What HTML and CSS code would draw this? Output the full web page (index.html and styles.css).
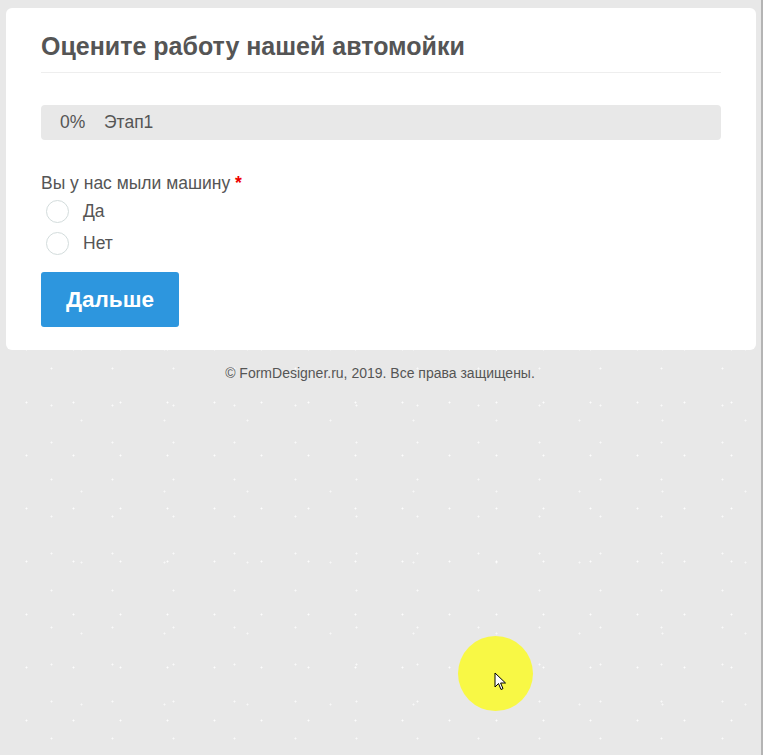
FILE: index.html
```html
<!DOCTYPE html>
<html lang="ru">
<head>
<meta charset="utf-8">
<title>Оцените работу нашей автомойки</title>
<link rel="stylesheet" href="styles.css">
</head>
<body>
<div class="page">
  <div class="card">
    <h1 class="title">Оцените работу нашей автомойки</h1>
    <div class="progress">
      <span class="pct">0%</span>
      <span class="stage">Этап1</span>
    </div>
    <div class="question">
      <div class="label">Вы у нас мыли машину <span class="req">*</span></div>
      <label class="option"><span class="radio"></span><span class="opt-text">Да</span></label>
      <label class="option"><span class="radio"></span><span class="opt-text">Нет</span></label>
    </div>
    <button class="next" type="button">Дальше</button>
  </div>
  <div class="footer">© FormDesigner.ru, 2019. Все права защищены.</div>
</div>
<div class="cursor">
  <svg width="14" height="20" viewBox="0 0 14 20" class="arrow">
    <path d="M1 1 L1 15 L4.5 11.5 L7 17.5 L9 16.6 L6.6 11 L11.5 11 Z" fill="#fff" stroke="#000" stroke-width="1" stroke-linejoin="miter"/>
  </svg>
</div>
</body>
</html>
```
FILE: styles.css
```css
html, body {
  margin: 0;
  padding: 0;
  height: 100%;
}
body {
  background-color: #e8e8e8;
  background-image:
    radial-gradient(circle, rgba(255,255,255,0.9) 0.8px, transparent 1.2px),
    radial-gradient(circle, rgba(255,255,255,0.8) 0.8px, transparent 1.2px),
    radial-gradient(circle, rgba(255,255,255,0.7) 0.8px, transparent 1.2px);
  background-size: 47px 53px, 61px 37px, 83px 71px;
  background-position: 3px 5px, 21px 17px, 40px 30px;
  font-family: "Liberation Sans", Arial, sans-serif;
  color: #555;
  overflow: hidden;
  position: relative;
  box-sizing: border-box;
  border-right: 2px solid #b4b4b4;
}
.page {
  padding: 8px 5px 0 6px;
}
.card {
  background: #fff;
  border-radius: 6px;
  padding: 26px 35px 23px 35px;
}
.title {
  margin: 0;
  font-size: 25px;
  font-weight: bold;
  color: #555;
  line-height: 24px;
  padding-bottom: 14px;
  border-bottom: 1px solid #eeeeee;
}
.progress {
  margin-top: 32px;
  background: #e8e8e8;
  border-radius: 4px;
  height: 35px;
  display: flex;
  align-items: center;
  padding-left: 19px;
  font-size: 17.5px;
  color: #555;
}
.pct {
  width: 44px;
}
.question {
  margin-top: 32px;
  font-size: 17.5px;
}
.label {
  line-height: 22px;
  margin-bottom: 1px;
  color: #555;
}
.req {
  color: #e00;
  font-weight: bold;
}
.option {
  display: flex;
  align-items: center;
  height: 32px;
  padding-left: 5px;
  color: #555;
}
.radio {
  width: 21px;
  height: 21px;
  border: 1px solid #d3dcdc;
  border-radius: 50%;
  background: #fff;
  margin-right: 14px;
}
.next {
  margin-top: 13px;
  width: 138px;
  height: 55px;
  background: #2d96de;
  border: none;
  border-radius: 3px;
  color: #fff;
  font-family: "Liberation Sans", Arial, sans-serif;
  font-weight: bold;
  font-size: 22.5px;
  padding: 0;
}
.footer {
  text-align: center;
  font-size: 14px;
  color: #555;
  margin-top: 15px;
  line-height: 16px;
  padding-right: 2px;
}
.cursor {
  position: absolute;
  left: 458px;
  top: 636px;
  width: 75px;
  height: 75px;
  border-radius: 50%;
  background: #f8f845;
}
.arrow {
  position: absolute;
  left: 36px;
  top: 36px;
}
```
